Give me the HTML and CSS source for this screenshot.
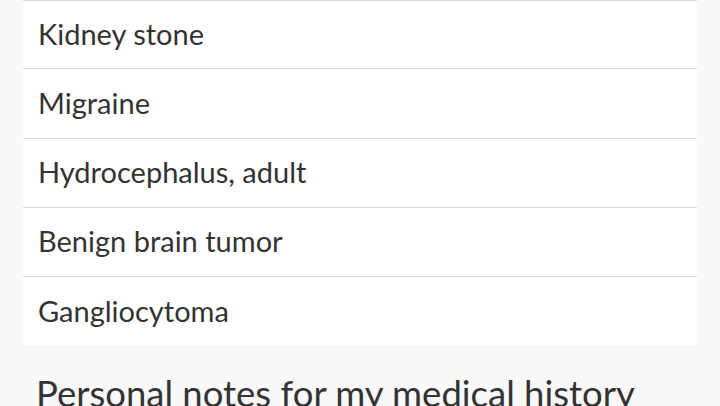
FILE: index.html
```html
<!DOCTYPE html>
<html lang="en">
<head>
<meta charset="utf-8">
<link rel="stylesheet" href="styles.css">
</head>
<body>
<div class="page">
  <ul class="list">
    <li class="row">Kidney stone</li>
    <li class="row">Migraine</li>
    <li class="row">Hydrocephalus, adult</li>
    <li class="row">Benign brain tumor</li>
    <li class="row">Gangliocytoma</li>
  </ul>
  <h2 class="heading">Personal notes for my medical history</h2>
</div>
</body>
</html>
```
FILE: styles.css
```css
html, body {
  margin: 0;
  padding: 0;
  background: #f8f8f8;
}
body {
  font-family: Lato, "Noto Sans", sans-serif;
  color: #333333;
  overflow: hidden;
  height: 406px;
}
.page {
  padding: 0 23px;
}
.list {
  list-style: none;
  margin: 0;
  padding: 0;
  background: #ffffff;
}
.row {
  box-sizing: border-box;
  height: 69.25px;
  border-top: 1px solid #dcdcdc;
  padding-left: 15px;
  padding-bottom: 2px;
  display: flex;
  align-items: center;
  font-size: 29px;
  line-height: 1;
}
.row:first-child {
  height: 68.25px;
}
.heading {
  margin: 0;
  padding: 30px 0 0 13px;
  font-size: 36.5px;
  font-weight: 400;
  line-height: 1;
  white-space: nowrap;
}
```
